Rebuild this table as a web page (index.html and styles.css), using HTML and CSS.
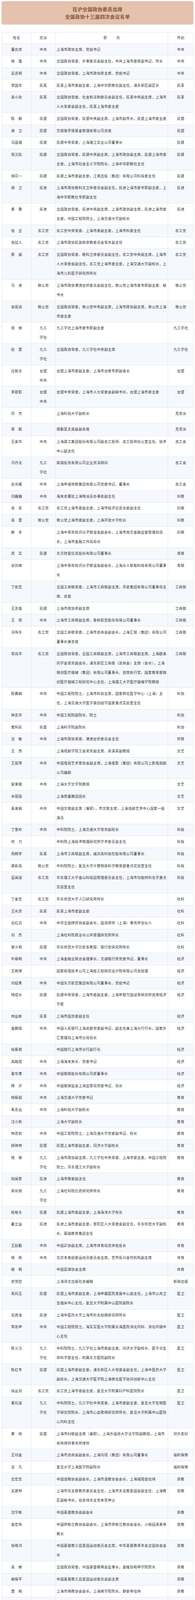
FILE: index.html
```html
<!DOCTYPE html>
<html lang="zh-CN">
<head>
<meta charset="utf-8">
<title>在沪全国政协委员出席全国政协十三届四次会议名单</title>
<link rel="stylesheet" href="styles.css">
</head>
<body>
<div class="page">
  <div class="title">在沪全国政协委员出席<br>全国政协十三届四次会议名单</div>
  <table class="roster">
    <colgroup>
      <col class="w-name"><col class="w-party"><col class="w-duty"><col class="w-sector">
    </colgroup>
    <thead>
      <tr><th>姓名</th><th>党派</th><th>职&emsp;&emsp;&ensp;务</th><th>界别</th></tr>
    </thead>
    <tbody>
      <tr><td>董云虎</td><td>中共</td><td>上海市政协主席、党组书记</td><td>中共</td></tr>
      <tr><td>杨　雄</td><td>中共</td><td>全国政协常委、外事委员会副主任，中共上海市委原副书记、市长</td><td>中共</td></tr>
      <tr><td>吴志明</td><td>中共</td><td>全国政协常委，上海市政协原主席、党组书记</td><td>中共</td></tr>
      <tr><td>李国华</td><td>民革</td><td>民革上海市委副主委，上海中华职教社副主任，浦东新区副区长</td><td>民革</td></tr>
      <tr><td>高小玫</td><td>民革</td><td>全国政协常委、社会和法制委员会副主任，民革中央副主席，上海市人大常委会副主任，民革上海市委主委</td><td>民革</td></tr>
      <tr><td>陈　群</td><td>民盟</td><td>全国政协常委，民盟中央副主席，上海市副市长，民盟上海市委主委</td><td>民盟</td></tr>
      <tr><td>谢　卫</td><td>民盟</td><td>交银施罗德基金管理有限公司总裁</td><td>民盟</td></tr>
      <tr><td>马国湘</td><td>民建</td><td>民建中央常委，上海湘江实业公司董事长</td><td>民建</td></tr>
      <tr><td>周汉民</td><td>民建</td><td>全国政协常委，民建中央副主席，上海市政协副主席，民建上海市委主委，上海市社会主义学院院长，上海中华职教社主任</td><td>民建</td></tr>
      <tr><td>胡可一</td><td>民建</td><td>民建上海市委副主委，江南造船（集团）有限公司科技委主任</td><td>民建</td></tr>
      <tr><td>胡　卫</td><td>民进</td><td>上海市政协教科文卫体委员会副主任，民进上海市委专职副主委，上海中华职教社专职副主任</td><td>民进</td></tr>
      <tr><td>黄　震</td><td>民进</td><td>全国政协常委，民进中央副主席，上海市政协副主席，民进上海市委主委，中国工程院院士，上海交通大学副校长</td><td>民进</td></tr>
      <tr><td>张　全</td><td>农工党</td><td>农工党中央常委、上海市委副主委，上海市科委主任</td><td>农工党</td></tr>
      <tr><td>张喆人</td><td>农工党</td><td>上海市政协民族和宗教委员会常务副主任</td><td>农工党</td></tr>
      <tr><td>蔡　威</td><td>农工党</td><td>全国政协常委、教科卫体委员会副主任，农工党中央副主席，上海市人大常委会副主任，农工党上海市委主委，上海交通大学副校长，上海市儿科医学研究所所长</td><td>农工党</td></tr>
      <tr><td>马　进</td><td>致公党</td><td>上海市政协港澳台侨委员会副主任，致公党上海市委专职副主委、秘书长</td><td>致公党</td></tr>
      <tr><td>张恩迪</td><td>致公党</td><td>全国政协常委，致公党中央副主席，上海市政协副主席，致公党上海市委主委</td><td>致公党</td></tr>
      <tr><td>周　锋</td><td>九三<br>学社</td><td>九三学社上海市委专职副主委</td><td>九三学社</td></tr>
      <tr><td>赵　雯</td><td>九三<br>学社</td><td>全国政协常委，九三学社中央副主席</td><td>九三学社</td></tr>
      <tr><td>庄振文</td><td>台盟<br>中共</td><td>台盟上海市委副主委，上海市台联专职副会长</td><td>台盟</td></tr>
      <tr><td>李碧影</td><td>台盟<br>中共</td><td>台盟中央常委，上海市人大常委会副秘书长，台盟上海市委主委</td><td>台盟</td></tr>
      <tr class="tall"><td>印　杰</td><td></td><td>上海科技大学副校长</td><td>无党派</td></tr>
      <tr class="loose"><td>蒋　颖</td><td></td><td>德勤亚太高级副总裁</td><td>无党派</td></tr>
      <tr><td>王美华</td><td>中共</td><td>上海建工集团股份有限公司副总工程师、总工程师办公室主任、技术中心副主任</td><td>总工会</td></tr>
      <tr><td>冯丹龙</td><td>九三<br>学社</td><td>辉瑞投资有限公司企业资深顾问</td><td>总工会</td></tr>
      <tr><td>俞光耀</td><td>中共</td><td>上海申通地铁集团有限公司党委书记、董事长</td><td>总工会</td></tr>
      <tr><td>刘巍巍</td><td>中共</td><td>海关总署驻上海特派员办事处副主任</td><td>妇联</td></tr>
      <tr><td>张　英</td><td>农工党</td><td>农工党上海市委副主委，上海市经济信息化委副主任</td><td>妇联</td></tr>
      <tr><td>袁　雯</td><td>致公党</td><td>致公党上海市委副主委，上海开放大学校长</td><td>妇联</td></tr>
      <tr><td>解　冬</td><td></td><td>上海中青年知识分子联谊会副会长，上海市地方金融监督管理局局长，上海市金融工作局局长</td><td>妇联</td></tr>
      <tr><td>其　实</td><td>民建</td><td>东方财富信息股份有限公司董事长</td><td>青联</td></tr>
      <tr><td>谈剑锋</td><td></td><td>上海中青年知识分子联谊会副会长，上海众人智能科技有限公司董事长</td><td>青联</td></tr>
      <tr><td>丁佐宏</td><td></td><td>全国工商联常委，上海市工商联副主席，月星集团有限公司董事局主席、总裁</td><td>工商联</td></tr>
      <tr><td>王志雄</td><td>民建</td><td>上海市政协原副主席</td><td>工商联</td></tr>
      <tr><td>王　煜</td><td>中共</td><td>上海市工商联副主席，春秋航空股份有限公司董事长</td><td>工商联</td></tr>
      <tr><td>沃伟东</td><td>农工党</td><td>全国工商联常委，上海市总商会副会长，上海汇银（集团）有限公司董事长兼总裁</td><td>工商联</td></tr>
      <tr><td>常兆华</td><td>农工党</td><td>全国政协常委，全国工商联副主席，上海市工商联副主席，上海欧美同学会常务副会长，浦东新区工商联（总商会）主席（会长），上海微创医疗器械（集团）有限公司董事长、首席执行官，国家教育部微创医疗器械工程研究中心主任，上海理工大学医疗器械学院教授</td><td>工商联</td></tr>
      <tr><td>陈赛娟</td><td>中共</td><td>中国工程院院士，上海市科协主席，国家转化医学中心（上海）主任，上海交通大学医学基因组学国家重点实验室主任</td><td>科协</td></tr>
      <tr><td>钟志华</td><td>中共</td><td>中国工程院副院长、院士</td><td>科协</td></tr>
      <tr><td>曹阿民</td><td>民盟</td><td>上海科学院副院长</td><td>科协</td></tr>
      <tr><td>沈　敏</td><td>中共</td><td>上海市政协常委、港澳台侨委员会主任</td><td>侨联</td></tr>
      <tr><td>王　苏</td><td></td><td>上海戏剧学院工会常务副主席、表演系副教授</td><td>文艺</td></tr>
      <tr><td>王丽萍</td><td>中共</td><td>中国电视艺术家协会副主席，上海电影（集团）有限公司上影电视剧公司编剧</td><td>文艺</td></tr>
      <tr><td>安来顺</td><td>中共</td><td>上海大学文学院教授</td><td>文艺</td></tr>
      <tr><td>辛丽丽</td><td></td><td>上海芭蕾舞团团长</td><td>文艺</td></tr>
      <tr><td>奚美娟</td><td>中共</td><td>中国文联副主席（兼职），市文联主席，上海话剧艺术中心国家一级演员</td><td>文艺</td></tr>
      <tr><td>丁奎岭</td><td>中共</td><td>中科院院士，上海交通大学常务副校长</td><td>科技</td></tr>
      <tr><td>何　力</td><td></td><td>中科院上海技术物理研究所学术委员会主任</td><td>科技</td></tr>
      <tr><td>周桐宇</td><td>民革</td><td>上海市工商联副主席，威达高科技控股有限公司董事长</td><td>科技</td></tr>
      <tr><td>龚新高</td><td>致公党</td><td>中科院院士，复旦大学计算物质科学教育部重点实验室主任</td><td>科技</td></tr>
      <tr><td>蓝闽波</td><td>农工党</td><td>华东理工大学金山科技园管理委员会主任，上海市功能材料化学重点实验室主任</td><td>科技</td></tr>
      <tr><td>丁金宏</td><td>农工党</td><td>华东师范大学人口研究所所长</td><td>社科</td></tr>
      <tr><td>王光贤</td><td>民革</td><td>民革上海市委副主委</td><td>社科</td></tr>
      <tr><td>吕红兵</td><td>中共</td><td>中华全国律师协会副会长，国浩律师（上海）事务所合伙人</td><td>社科</td></tr>
      <tr><td>刘　杰</td><td></td><td>上海社科院政治与公共管理研究所所长</td><td>社科</td></tr>
      <tr><td>章义和</td><td>民盟</td><td>华东师范大学历史系教授、银行史研究所所长</td><td>社科</td></tr>
      <tr><td>牛锡明</td><td>中共</td><td>上海金融业联合会理事长，交通银行原党委书记、董事长</td><td>经济</td></tr>
      <tr><td>王明弹</td><td></td><td>国家核电技术公司上海核工程研究设计院有限公司总经理</td><td>经济</td></tr>
      <tr><td>刘绍勇</td><td>中共</td><td>中国东方航空集团有限公司董事长、党组书记</td><td>经济</td></tr>
      <tr><td>杨成长</td><td>民建</td><td>民建中央常委、上海市委副主委，上海申银万国证券研究所首席经济学家</td><td>经济</td></tr>
      <tr><td>林益彬</td><td>民革</td><td>上海市国资委副主任</td><td>经济</td></tr>
      <tr><td>金鹏辉</td><td>中共</td><td>中国人民银行上海总部党委副书记、副主任兼上海分行行长，国家外汇管理局上海市分局局长</td><td>经济</td></tr>
      <tr><td>徐葵君</td><td></td><td>中国银行上海市分行副行长</td><td>经济</td></tr>
      <tr><td>高融昆</td><td>中共</td><td>上海海关关长、党委书记</td><td>经济</td></tr>
      <tr><td>葛华勇</td><td>中共</td><td>中国银联股份有限公司原董事长</td><td>经济</td></tr>
      <tr><td>韩　沂</td><td>中共</td><td>中国银保监会上海监管局党委书记、局长</td><td>经济</td></tr>
      <tr><td>杨振斌</td><td>中共</td><td>上海交通大学党委书记</td><td>教育</td></tr>
      <tr><td>朱志远</td><td>中共</td><td>上海科技大学副校长</td><td>教育</td></tr>
      <tr><td>汪小帆</td><td></td><td>上海大学副校长</td><td>教育</td></tr>
      <tr><td>林忠钦</td><td>中共</td><td>中国工程院院士，上海交通大学党委副书记、校长</td><td>教育</td></tr>
      <tr><td>顾祥林</td><td>民盟</td><td>民盟上海市委副主委，同济大学副校长</td><td>教育</td></tr>
      <tr><td>钱　锋</td><td>九三<br>学社</td><td>上海市政协副主席，九三学社中央常委、上海市委主委，中国工程院院士，华东理工大学副校长</td><td>教育</td></tr>
      <tr><td>倪闽景</td><td>民进</td><td>上海市教委副主任</td><td>教育</td></tr>
      <tr><td>郭长刚</td><td>九三<br>学社</td><td>上海社科院历史研究所所长</td><td>教育</td></tr>
      <tr><td>程裕东</td><td>民建</td><td>民建上海市委副主委，上海海洋大学校长</td><td>教育</td></tr>
      <tr><td>戴立益</td><td>民进</td><td>民进上海市委副主委，普陀区人大常委会副主任，华东师范大学副校长、基础教育集团主任</td><td>教育</td></tr>
      <tr><td>王励勤</td><td>中共</td><td>中国乒协副主席，上海市体育局竞体处处长</td><td>体育</td></tr>
      <tr><td>杨　扬</td><td>中共</td><td>北京冬奥组委运动员委员会主席，世界反兴奋剂机构副主席</td><td>体育</td></tr>
      <tr><td>姚　明</td><td></td><td>中国篮球协会主席</td><td>体育</td></tr>
      <tr><td>史领空</td><td></td><td>上海译文出版社总编辑</td><td>新闻出版</td></tr>
      <tr><td>朱同玉</td><td>民盟</td><td>民盟上海市委副主委，上海申康医院发展中心副主任，上海市公共卫生临床中心主任，复旦大学附属中山医院副院长</td><td>医卫</td></tr>
      <tr><td>吴焕淦</td><td>民进</td><td>上海中医药大学上海市针灸经络研究所所长</td><td>医卫</td></tr>
      <tr><td>李兆申</td><td>中共</td><td>中国工程院院士，海军军医大学附属长海医院消化内科、消化内镜中心主任</td><td>医卫</td></tr>
      <tr><td>陈义汉</td><td>九三<br>学社</td><td>中科院院士，九三学社上海市委副主委，同济大学副校长、医学与生命科学部主任、附属东方医院副院长</td><td>医卫</td></tr>
      <tr><td>陈红专</td><td>民盟</td><td>民盟上海市委副主委，浦东新区人大常委会副主任，上海中医药大学副校长，上海交通大学医学院上海转化医学协同创新中心主任</td><td>医卫</td></tr>
      <tr><td>徐丛剑</td><td>农工党</td><td>农工党上海市委副主委，复旦大学附属妇产科医院院长</td><td>医卫</td></tr>
      <tr><td>葛均波</td><td>九三<br>学社</td><td>中科院院士，九三学社中央常委、上海市委副主委，复旦大学生物医学研究院院长、上海市心血管病研究所所长、复旦大学附属中山医院心内科主任</td><td>医卫</td></tr>
      <tr><td>黄　绮</td><td>民盟</td><td>上海市妇联副主席（兼职），上海外国语大学法学院副教授，上海市尚伟律师事务所律师</td><td>对外友好</td></tr>
      <tr><td>王均金</td><td></td><td>上海市总商会副会长，上海均瑶（集团）有限公司董事长</td><td>福利保障</td></tr>
      <tr><td>吴　凡</td><td></td><td>复旦大学上海医学院副院长</td><td>福利保障</td></tr>
      <tr><td>吉宏忠</td><td></td><td>中国道教协会副会长，上海市道教协会会长，上海城隍庙住持</td><td>宗教</td></tr>
      <tr><td>吴建林</td><td></td><td>上海市天主教教务委员会主任，上海市天主教爱国会副主任、上海教区副秘书长，伯多禄天主堂本堂神父</td><td>宗教</td></tr>
      <tr><td>沈学彬</td><td></td><td>中国基督教协会副会长</td><td>宗教</td></tr>
      <tr><td>金宏伟</td><td></td><td>中国伊斯兰教协会副会长，上海市伊斯兰教协会会长，小桃园清真寺教长</td><td>宗教</td></tr>
      <tr><td>徐晓鸿</td><td></td><td>中国基督教三自爱国运动委员会主席，中华基督教青年会全国协会会长</td><td>宗教</td></tr>
      <tr><td>高　峰</td><td></td><td>全国政协常委，中国基督教两会监事长，金陵协和神学院院长</td><td>宗教</td></tr>
      <tr><td>阚保平</td><td></td><td>中国基督教三自爱国运动委员会副主席</td><td>宗教</td></tr>
      <tr><td>慧　明</td><td></td><td>上海市佛教协会会长，上海佛学院院长，静安寺住持</td><td>宗教</td></tr>
      <tr><td>郑钢淼</td><td>中共</td><td>中共上海市委常委、统战部部长，上海市政协党组副书记，上海市社会主义学院党组书记</td><td>特邀</td></tr>
      <tr><td>姜　平</td><td>中共</td><td>上海市政府参事室主任、党组书记，上海市政协原副主席、党组副书记</td><td>特邀</td></tr>
      <tr><td>陈昱国</td><td>中共</td><td>南部战区政治工作部原副主任</td><td>特邀</td></tr>
    </tbody>
  </table>
</div>
</body>
</html>
```

FILE: styles.css
```css
html, body {
  margin: 0;
  padding: 0;
  background: #ffffff;
}

body {
  font-family: "Noto Sans CJK SC", "Noto Sans", sans-serif;
  color: #333333;
}

.page {
  padding: 3px 4px 0;
}

.title {
  box-sizing: border-box;
  height: 60px;
  padding: 10.7px 0;
  border-radius: 4px;
  background: #e4c2ad;
  color: #84533a;
  font-size: 12.5px;
  font-weight: bold;
  letter-spacing: 0.3px;
  line-height: 19.3px;
  text-align: center;
}

.roster {
  width: 492px;
  margin-top: 20px;
  border-collapse: collapse;
  table-layout: fixed;
  font-size: 9px;
  letter-spacing: 0.4px;
  line-height: 24px;
}

.w-name { width: 76px; }
.w-party { width: 61px; }
.w-duty { width: 289px; }
.w-sector { width: 66px; }

.roster th,
.roster td {
  border: 1px solid #e3e7ed;
  padding: 2.85px 2px 2.85px 3px;
  vertical-align: top;
  text-align: center;
}

.roster th {
  padding-top: 1.35px;
  padding-bottom: 1.35px;
  font-weight: normal;
  color: #444444;
  background: #ffffff;
  vertical-align: middle;
}

.roster td:nth-child(3) {
  text-align: left;
}

.roster th:nth-child(1),
.roster td:nth-child(1),
.roster th:nth-child(2),
.roster td:nth-child(2),
.roster th:nth-child(4),
.roster td:nth-child(4) {
  padding-left: 2px;
  padding-right: 2px;
}

.roster tbody tr:nth-child(odd) {
  background: #f5f8fc;
}

.roster tbody tr:nth-child(even) {
  background: #ffffff;
}

.roster tr.tall td {
  padding-bottom: 12.15px;
}

.roster tr.loose td {
  padding-bottom: 3.85px;
}
```
